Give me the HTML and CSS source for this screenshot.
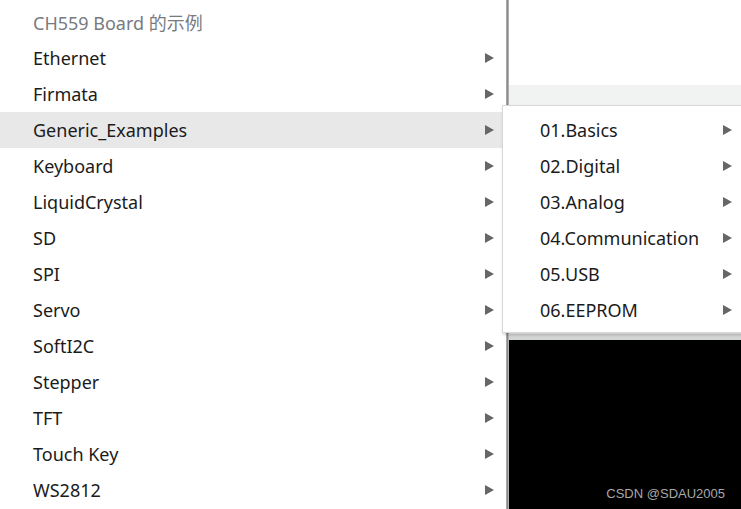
FILE: index.html
```html
<!DOCTYPE html>
<html>
<head>
<meta charset="utf-8">
<link rel="stylesheet" href="styles.css">
</head>
<body>
<div class="screen">
  <div class="menu">
    <div class="item header">CH559 Board 的示例</div>
    <div class="item"><span>Ethernet</span><i class="arrow"></i></div>
    <div class="item"><span>Firmata</span><i class="arrow"></i></div>
    <div class="item active"><span>Generic_Examples</span><i class="arrow"></i></div>
    <div class="item"><span>Keyboard</span><i class="arrow"></i></div>
    <div class="item"><span>LiquidCrystal</span><i class="arrow"></i></div>
    <div class="item"><span>SD</span><i class="arrow"></i></div>
    <div class="item"><span>SPI</span><i class="arrow"></i></div>
    <div class="item"><span>Servo</span><i class="arrow"></i></div>
    <div class="item"><span>SoftI2C</span><i class="arrow"></i></div>
    <div class="item"><span>Stepper</span><i class="arrow"></i></div>
    <div class="item"><span>TFT</span><i class="arrow"></i></div>
    <div class="item"><span>Touch Key</span><i class="arrow"></i></div>
    <div class="item"><span>WS2812</span><i class="arrow"></i></div>
  </div>
  <div class="divider"></div>
  <div class="backdrop">
    <div class="pane-white"></div>
    <div class="pane-grey"></div>
    <div class="pane-black"><span class="watermark">CSDN @SDAU2005</span></div>
  </div>
  <div class="submenu">
    <div class="item"><span>01.Basics</span><i class="arrow"></i></div>
    <div class="item"><span>02.Digital</span><i class="arrow"></i></div>
    <div class="item"><span>03.Analog</span><i class="arrow"></i></div>
    <div class="item"><span>04.Communication</span><i class="arrow"></i></div>
    <div class="item"><span>05.USB</span><i class="arrow"></i></div>
    <div class="item"><span>06.EEPROM</span><i class="arrow"></i></div>
  </div>
</div>
</body>
</html>
```
FILE: styles.css
```css
html, body {
  margin: 0;
  padding: 0;
  background: #ffffff;
}
.screen {
  position: relative;
  width: 741px;
  height: 509px;
  overflow: hidden;
  display: flex;
  font-family: "Noto Sans", "Noto Sans CJK SC", sans-serif;
  font-size: 18px;
  color: #1b1b1b;
}
.menu {
  width: 506px;
  padding-top: 4px;
  background: #ffffff;
  display: flex;
  flex-direction: column;
}
.item {
  height: 36px;
  display: flex;
  align-items: center;
  justify-content: space-between;
  padding-left: 33px;
  padding-right: 12px;
  padding-bottom: 1px;
  box-sizing: border-box;
}
.item.header {
  color: #777b80;
}
.item.active {
  background: #e8e8e8;
}
.arrow {
  width: 0;
  height: 0;
  margin-top: 1px;
  border-top: 5px solid transparent;
  border-bottom: 5px solid transparent;
  border-left: 9px solid #666666;
}
.divider {
  width: 3px;
  background: linear-gradient(to right, #b5b5b5, #8a8a8a, #c4c4c4);
}
.backdrop {
  flex: 1;
  display: flex;
  flex-direction: column;
}
.pane-white {
  height: 85px;
  background: #ffffff;
}
.pane-grey {
  height: 249px;
  background: #f1f2f2;
  border-bottom: 6px solid #d3d5d5;
}
.pane-black {
  flex: 1;
  background: #000000;
  display: flex;
  align-items: flex-end;
  justify-content: flex-end;
  padding: 0 16px 8px 0;
}
.watermark {
  font-family: "Liberation Sans", Arial, sans-serif;
  font-size: 13px;
  color: #a8a8a8;
}
.submenu {
  position: absolute;
  left: 502px;
  top: 105px;
  width: 250px;
  padding: 6px 0 8px;
  background: #ffffff;
  border: 1px solid #d8d8d8;
  box-shadow: 1px 2px 3px rgba(0, 0, 0, 0.18);
  box-sizing: border-box;
  height: 228px;
}
.submenu .item {
  padding-left: 37px;
  padding-right: 19px;
}
```
